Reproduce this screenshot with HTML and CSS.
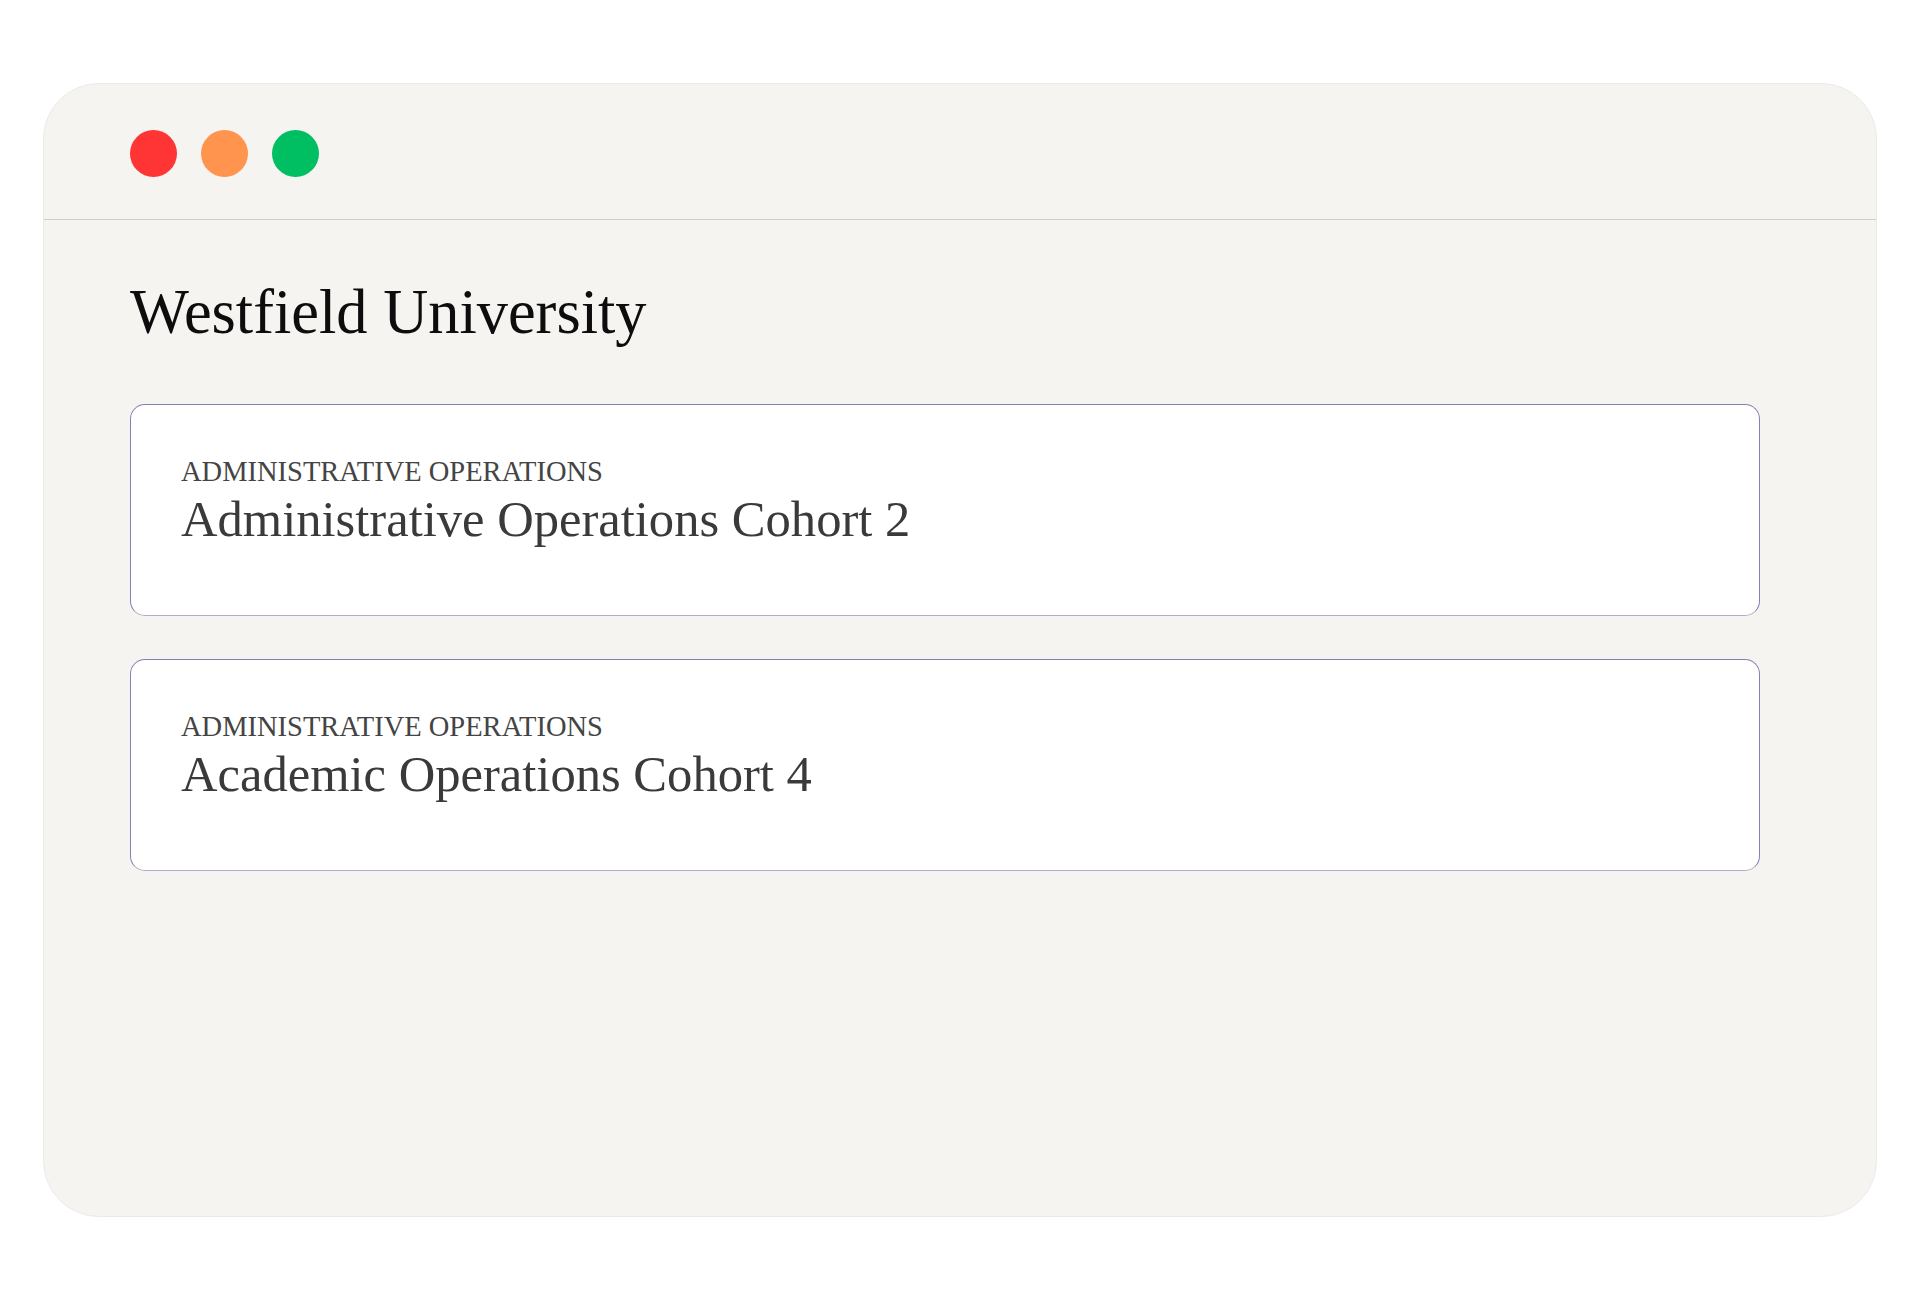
FILE: index.html
```html
<!DOCTYPE html>
<html lang="en">
<head>
<meta charset="utf-8">
<title>Westfield University</title>
<link rel="stylesheet" href="styles.css">
</head>
<body>
<div class="window">
  <div class="titlebar">
    <span class="dot dot-red"></span>
    <span class="dot dot-orange"></span>
    <span class="dot dot-green"></span>
  </div>
  <main class="content">
    <h1 class="page-title">Westfield University</h1>
    <div class="cards">
      <div class="card">
        <div class="card-label">ADMINISTRATIVE OPERATIONS</div>
        <div class="card-title">Administrative Operations Cohort 2</div>
      </div>
      <div class="card">
        <div class="card-label">ADMINISTRATIVE OPERATIONS</div>
        <div class="card-title">Academic Operations Cohort 4</div>
      </div>
    </div>
  </main>
</div>
</body>
</html>
```

FILE: styles.css
```css
html, body {
  margin: 0;
  padding: 0;
  background: #ffffff;
}

body {
  font-family: "Liberation Serif", "Times New Roman", serif;
  padding: 83px 0 0 43px;
  box-sizing: border-box;
  height: 1300px;
}

.window {
  width: 1834px;
  height: 1134px;
  box-sizing: border-box;
  background: #f5f4f0;
  border: 1px solid #ebeae6;
  border-radius: 56px;
  overflow: hidden;
}

.titlebar {
  display: flex;
  gap: 24px;
  padding: 46px 86px 42px;
  border-bottom: 1px solid #cfcecb;
}

.dot {
  width: 47px;
  height: 47px;
  border-radius: 50%;
  display: block;
}

.dot-red { background: #ff3434; }
.dot-orange { background: #ff944f; }
.dot-green { background: #00bf63; }

.content {
  padding: 56px 116px 0 86px;
}

.page-title {
  margin: 0 0 56px;
  font-weight: 400;
  font-size: 62.4px;
  line-height: 72px;
  color: #0d0d0d;
}

.cards {
  display: flex;
  flex-direction: column;
  gap: 43px;
}

.card {
  background: #ffffff;
  border: 1px solid #8a7cb8;
  border-bottom-color: #b2adc4;
  border-radius: 15px;
  padding: 50px 50px 66px;
}

.card-label {
  font-size: 28.5px;
  line-height: 34px;
  color: #444444;
}

.card-title {
  font-size: 50.6px;
  line-height: 60px;
  color: #3a3a3a;
}
```
